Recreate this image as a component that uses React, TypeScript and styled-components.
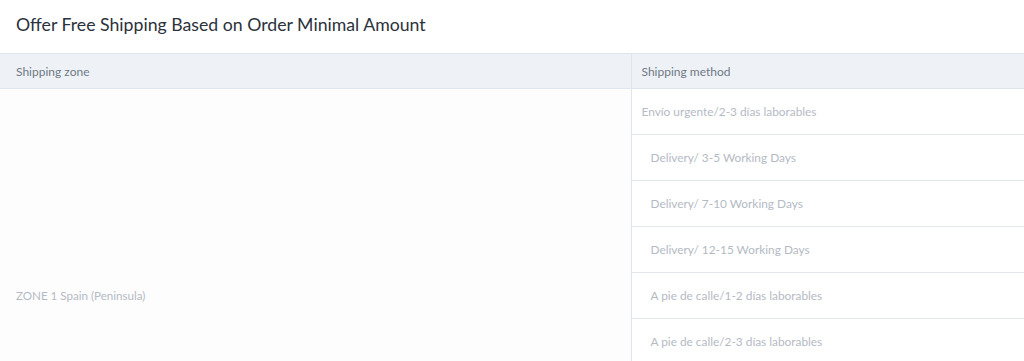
import React from 'react';
import styled, { createGlobalStyle } from 'styled-components';

const GlobalStyle = createGlobalStyle`
  body {
    margin: 0;
    background: #ffffff;
    font-family: Lato, "Open Sans", sans-serif;
  }
`;

const Page = styled.div`
  width: 1024px;
  height: 361px;
  overflow: hidden;
`;

const Title = styled.h2`
  margin: 0;
  padding: 14px 16px 0;
  height: 53px;
  box-sizing: border-box;
  font-size: 17.7px;
  line-height: 22px;
  font-weight: 400;
  color: #2b323b;
`;

const Table = styled.table`
  width: 100%;
  border-collapse: collapse;
  table-layout: fixed;
`;

const HeadCell = styled.th<{ $first?: boolean }>`
  height: 34px;
  padding: 0 0 0 ${(p) => (p.$first ? '16px' : '10px')};
  text-align: left;
  font-size: 12px;
  font-weight: 400;
  color: #6e7884;
  background: #eef2f7;
  border-top: 1px solid #dfe5ec;
  border-bottom: 1px solid #dfe5ec;
  & + & {
    border-left: 1px solid #dfe5ec;
  }
`;

const ZoneCell = styled.td`
  padding: 0 0 0 16px;
  vertical-align: middle;
  font-size: 11.6px;
  color: #b4bac4;
  background: #fdfdfe;
  border-right: 1px solid #dfe5ec;
`;

const MethodCell = styled.td<{ $indent?: boolean }>`
  height: 45px;
  padding: 0 0 0 ${(p) => (p.$indent ? '19px' : '10px')};
  font-size: 11.85px;
  color: #b4bac4;
  border-bottom: 1px solid #e2e7ee;
  background: #ffffff;
`;

const methods = [
  { name: 'Envío urgente/2-3 días laborables', indent: false },
  { name: 'Delivery/ 3-5 Working Days', indent: true },
  { name: 'Delivery/ 7-10 Working Days', indent: true },
  { name: 'Delivery/ 12-15 Working Days', indent: true },
  { name: 'A pie de calle/1-2 días laborables', indent: true },
  { name: 'A pie de calle/2-3 días laborables', indent: true },
];

// the zone cell spans rows that continue below the visible area
const hiddenRows = 3;

export default function App() {
  return (
    <Page>
      <GlobalStyle />
      <Title>Offer Free Shipping Based on Order Minimal Amount</Title>
      <Table>
        <colgroup>
          <col style={{ width: 631 }} />
          <col />
        </colgroup>
        <thead>
          <tr>
            <HeadCell $first>Shipping zone</HeadCell>
            <HeadCell>Shipping method</HeadCell>
          </tr>
        </thead>
        <tbody>
          {methods.map((m, i) => (
            <tr key={m.name}>
              {i === 0 && (
                <ZoneCell rowSpan={methods.length + hiddenRows}>ZONE 1 Spain (Peninsula)</ZoneCell>
              )}
              <MethodCell $indent={m.indent}>{m.name}</MethodCell>
            </tr>
          ))}
          {Array.from({ length: hiddenRows }).map((_, i) => (
            <tr key={`more-${i}`}>
              <MethodCell $indent />
            </tr>
          ))}
        </tbody>
      </Table>
    </Page>
  );
}
